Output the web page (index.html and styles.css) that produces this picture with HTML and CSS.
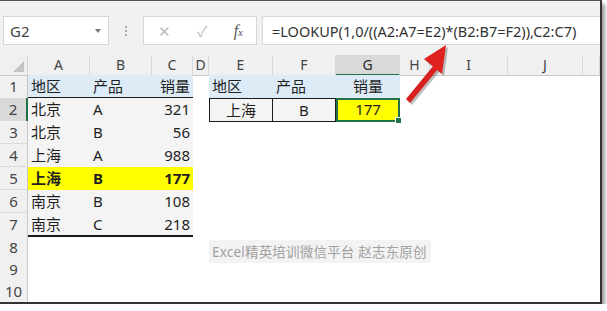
FILE: index.html
```html
<!DOCTYPE html>
<html lang="zh-CN">
<head>
    <meta charset="UTF-8">
    <meta name="viewport" content="width=device-width, initial-scale=1.0">
    <title>LOOKUP</title>
    <link rel="stylesheet" href="styles.css">
</head>
<body>
    <div class="window">
        <div class="toolbar">
            <div class="name-box">
                <span>G2</span>
                <span class="caret"></span>
            </div>
            <div class="grip"><i></i><i></i><i></i></div>
            <div class="fx-box">
                <span class="cancel">&#x2715;</span>
                <span class="enter">&#x2713;</span>
                <span class="fx"><i>f</i><small>x</small></span>
            </div>
            <div class="formula">=LOOKUP(1,0/((A2:A7=E2)*(B2:B7=F2)),C2:C7)</div>
        </div>

        <div class="sheet">
            <div class="row head">
                <div class="corner"><span class="tri"></span></div>
                <div class="col">A</div>
                <div class="col">B</div>
                <div class="col">C</div>
                <div class="col">D</div>
                <div class="col">E</div>
                <div class="col">F</div>
                <div class="col sel">G</div>
                <div class="col">H</div>
                <div class="col">I</div>
                <div class="col">J</div>
                <div class="col"></div>
            </div>
            <div class="row">
                <div class="num">1</div>
                <div class="cell title">地区</div>
                <div class="cell title">产品</div>
                <div class="cell title right">销量</div>
                <div class="cell"></div>
                <div class="cell title2">地区</div>
                <div class="cell title2">产品</div>
                <div class="cell title2 center">销量</div>
            </div>
            <div class="row">
                <div class="num sel">2</div>
                <div class="cell data">北京</div>
                <div class="cell data">A</div>
                <div class="cell data right">321</div>
                <div class="cell"></div>
                <div class="cell query first center">上海</div>
                <div class="cell query center">B</div>
                <div class="cell result center">177<span class="handle"></span></div>
            </div>
            <div class="row">
                <div class="num">3</div>
                <div class="cell data">北京</div>
                <div class="cell data">B</div>
                <div class="cell data right">56</div>
            </div>
            <div class="row">
                <div class="num">4</div>
                <div class="cell data">上海</div>
                <div class="cell data">A</div>
                <div class="cell data right">988</div>
            </div>
            <div class="row">
                <div class="num">5</div>
                <div class="cell hit">上海</div>
                <div class="cell hit">B</div>
                <div class="cell hit right">177</div>
            </div>
            <div class="row">
                <div class="num">6</div>
                <div class="cell data">南京</div>
                <div class="cell data">B</div>
                <div class="cell data right">108</div>
            </div>
            <div class="row">
                <div class="num">7</div>
                <div class="cell data last">南京</div>
                <div class="cell data last">C</div>
                <div class="cell data last right">218</div>
            </div>
            <div class="row short">
                <div class="num">8</div>
            </div>
            <div class="row short">
                <div class="num">9</div>
            </div>
            <div class="row short">
                <div class="num">10</div>
            </div>
        </div>

        <div class="watermark">Excel精英培训微信平台 赵志东原创</div>

        <svg class="arrow" width="70" height="80" viewBox="0 0 70 80">
            <g transform="translate(2,2)" fill="rgba(0,0,0,0.25)">
                <path d="M8 58 L36 24 L40 28 L12 62 Z"/>
                <path d="M48 4 L26 18 L44 33 Z"/>
            </g>
            <path d="M8 58 L36 24 L40 28 L12 62 Z" fill="#d8201e"/>
            <path d="M48 4 L26 18 L44 33 Z" fill="#e0221f"/>
        </svg>
    </div>
</body>
</html>
```

FILE: styles.css
```css
body {
    margin: 0;
    background: #fff;
    font-family: "Noto Sans", "Noto Sans CJK SC", sans-serif;
}
.window {
    position: relative;
    box-sizing: border-box;
    width: 602px;
    height: 304px;
    border-top: 1px solid #555;
    border-right: 2px solid #333;
    border-bottom: 2px solid #333;
    box-shadow: 3px 4px 4px rgba(0, 0, 0, 0.4);
    overflow: hidden;
    background: #fff;
}
.toolbar {
    height: 54px;
    background: #f1f1f1;
    display: flex;
    align-items: flex-start;
    padding-top: 15px;
    box-sizing: border-box;
    padding-left: 3px;
}
.name-box, .fx-box, .formula {
    box-sizing: border-box;
    height: 29px;
    background: #fff;
    border: 1px solid #d6d6d6;
    display: flex;
    align-items: center;
}
.name-box {
    width: 106px;
    padding: 0 7px 0 6px;
    justify-content: space-between;
    font-size: 15px;
    color: #444;
}
.caret {
    width: 0;
    height: 0;
    border-left: 3px solid transparent;
    border-right: 3px solid transparent;
    border-top: 4px solid #777;
}
.grip {
    width: 34px;
    height: 29px;
    display: flex;
    flex-direction: column;
    align-items: center;
    justify-content: center;
    gap: 2px;
}
.grip i {
    width: 2px;
    height: 2px;
    background: #aaa;
}
.fx-box {
    width: 114px;
    padding: 0 13px 0 14px;
    justify-content: space-between;
    color: #bbb;
    font-size: 15px;
}
.fx-box .fx {
    color: #555;
    font-family: "Liberation Serif", serif;
    font-size: 16px;
}
.fx small {
    font-size: 11px;
    font-style: italic;
}
.formula {
    flex: 1;
    margin-left: 5px;
    padding-left: 9px;
    font-size: 14.5px;
    color: #333;
    white-space: nowrap;
    border-right: none;
}
.sheet {
    font-family: "Noto Sans", "Noto Sans CJK SC", sans-serif;
}
.row {
    display: grid;
    grid-template-columns: 28px 62px 62px 41px 16px 64px 63px 64px 30px 78px 75px 1fr;
    height: 23px;
}
.row.head {
    height: 20px;
}
.row.short {
    height: 22px;
}
.corner, .col, .num {
    box-sizing: border-box;
    background: #f0f0f0;
    color: #444;
}
.corner {
    position: relative;
    border-right: 1px solid #d4d4d4;
    border-bottom: 1px solid #c8c8c8;
}
.tri {
    position: absolute;
    right: 3px;
    bottom: 3px;
    width: 0;
    height: 0;
    border-left: 11px solid transparent;
    border-bottom: 11px solid #c4c4c4;
}
.col {
    border-right: 1px solid #d8d8d8;
    border-bottom: 1px solid #c8c8c8;
    font-size: 14px;
    text-align: center;
    line-height: 19px;
}
.col.sel {
    background: #d9d9d9;
    border-bottom: 2px solid #217346;
    color: #2a2a2a;
}
.num {
    border-right: 1px solid #c8c8c8;
    border-bottom: 1px solid #dadada;
    font-size: 15px;
    text-align: center;
    line-height: 22px;
}
.num.sel {
    background: #d9d9d9;
    border-right: 2px solid #217346;
}
.cell {
    box-sizing: border-box;
    font-size: 15px;
    line-height: 22px;
    padding: 0 3px;
    color: #1f1f1f;
    white-space: nowrap;
}
.right {
    text-align: right;
}
.center {
    text-align: center;
}
.title {
    background: #ddebf7;
    border-bottom: 2px solid #1a1a1a;
}
.title2 {
    background: #ddebf7;
}
.data {
    background: #f4f4f4;
}
.data.last {
    border-bottom: 2px solid #1a1a1a;
}
.hit {
    background: #ffff00;
    font-weight: bold;
}
.query {
    background: #f4f4f4;
    border: 1px solid #1a1a1a;
    border-left: none;
}
.query.first {
    border-left: 1px solid #1a1a1a;
}
.result {
    position: relative;
    background: #ffff00;
    border: 2px solid #217346;
    line-height: 19px;
}
.handle {
    position: absolute;
    right: -4px;
    bottom: -4px;
    width: 5px;
    height: 5px;
    background: #217346;
    border: 1px solid #fff;
}
.watermark {
    position: absolute;
    left: 209px;
    top: 239px;
    padding: 1px 4px 2px 3px;
    background: #f3f3f3;
    color: #a0a0a0;
    font-size: 13.5px;
    letter-spacing: 0.2px;
    font-family: "Noto Sans", "Noto Sans CJK SC", sans-serif;
}
.arrow {
    position: absolute;
    left: 398px;
    top: 40px;
}
```
